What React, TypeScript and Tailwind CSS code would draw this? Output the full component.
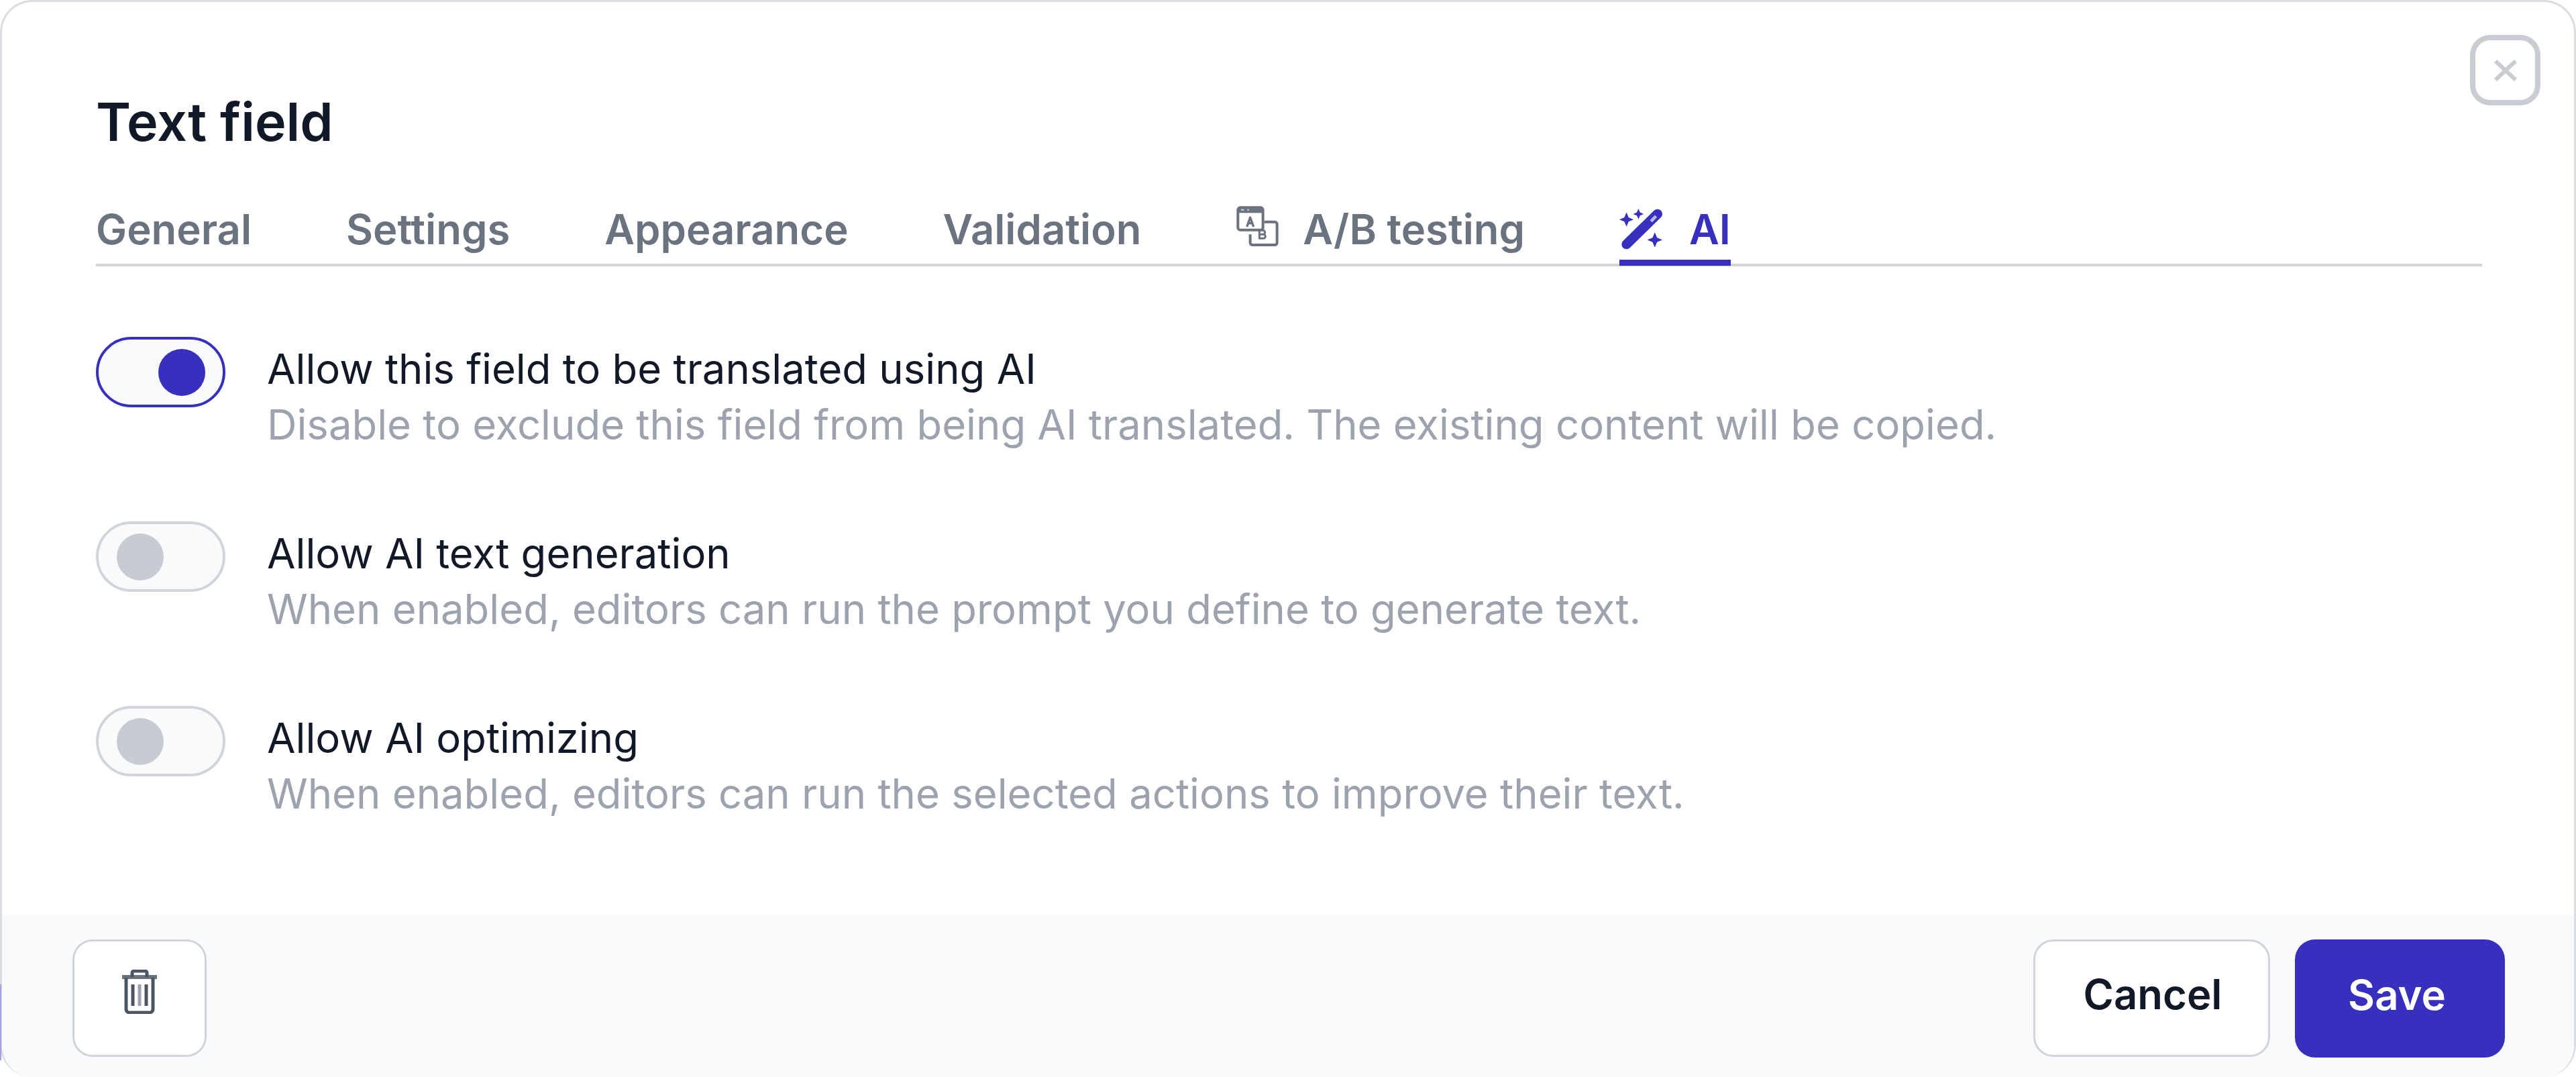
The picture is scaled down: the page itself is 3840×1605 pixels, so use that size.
import React from 'react';

const INDIGO = 'bg-[#372fbd]';

const AbIcon = () => (
  <svg viewBox="40 38 198 186" className="w-[66px] h-[62px] shrink-0" fill="none" stroke="#6b7280" strokeWidth="12" strokeLinejoin="round">
    <rect x="50" y="48" width="112" height="100" rx="10" />
    <rect x="50" y="46" width="112" height="26" fill="#6b7280" stroke="none" />
    <path d="M64 58h14M92 58h8" stroke="#d1d5db" strokeWidth="6" />
    <path d="M90 134l15-42 15 42M96 118h18" strokeWidth="10" />
    <path d="M168 112h47a10 10 0 0 1 10 10v83a10 10 0 0 1-10 10H115a10 10 0 0 1-10-10v-37" />
    <path d="M146 150h16a9 9 0 0 1 0 18h-16zM146 168h18a9 9 0 0 1 0 18h-18z" strokeWidth="9" />
  </svg>
);

const spark = (x: number, y: number, r: number) => {
  const k = r * 0.3;
  return `M${x} ${y - r}L${x + k} ${y - k}L${x + r} ${y}L${x + k} ${y + k}L${x} ${y + r}L${x - k} ${y + k}L${x - r} ${y}L${x - k} ${y - k}Z`;
};

const WandIcon = () => (
  <svg viewBox="40 40 200 197" className="w-[66px] h-[65px] shrink-0" fill="#372fbd">
    <path d="M72 207L212 70" stroke="#372fbd" strokeWidth="44" strokeLinecap="round" />
    <path d="M183 103L205 80" stroke="#b9b6ea" strokeWidth="14" />
    <path d={spark(72, 95, 32)} />
    <path d={spark(126, 70, 24)} />
    <path d={spark(200, 187, 34)} />
  </svg>
);

const TrashIcon = () => (
  <svg viewBox="0 0 52 66" className="w-[52px] h-[66px]" fill="none" stroke="#4b5563" strokeWidth="5">
    <path d="M0 11h52" strokeWidth="6" stroke="#6b7280" />
    <path d="M15 11V5a3 3 0 0 1 3-3h16a3 3 0 0 1 3 3v6" />
    <path d="M6 12v47a5 5 0 0 0 5 5h30a5 5 0 0 0 5-5V12" />
    <path d="M16 22v32M36 22v32" />
    <path d="M26 22v32" stroke="#9ca3af" />
  </svg>
);

const CloseIcon = () => (
  <svg viewBox="0 0 36 32" className="w-[36px] h-[32px]" fill="none" stroke="#c9cdd3" strokeWidth="6">
    <path d="M3 2l30 28M33 2L3 30" />
  </svg>
);

const tabs = ['General', 'Settings', 'Appearance', 'Validation'];

const rows = [
  { on: true, label: 'Allow this field to be translated using AI', hint: 'Disable to exclude this field from being AI translated. The existing content will be copied.' },
  { on: false, label: 'Allow AI text generation', hint: 'When enabled, editors can run the prompt you define to generate text.' },
  { on: false, label: 'Allow AI optimizing', hint: 'When enabled, editors can run the selected actions to improve their text.' },
];

const Toggle = ({ on }: { on: boolean }) => (
  <div className={`w-[193px] h-[105px] rounded-full border-[4px] shrink-0 flex items-center bg-[#f9fafb] ${on ? 'border-[#372fbd] justify-end pr-[26px]' : 'border-[#d1d5db] pl-[27px]'}`}>
    <div className={`w-[70px] h-[70px] rounded-full ${on ? INDIGO : 'bg-[#c7ccd3]'}`} />
  </div>
);

export default function App() {
  return (
    <div className="relative w-[3840px] h-[1605px] bg-white overflow-hidden font-['Inter',sans-serif]">
      <div className="w-full h-full flex flex-col rounded-[48px] border-x-[3px] border-t-[3px] border-[#d9dce1] overflow-hidden">
        <div className="flex-1 flex flex-col pl-[140px] pr-[137px] pt-[133px]">
          <h1 className="text-[79px] leading-[90px] font-semibold text-[#111827]">Text field</h1>
          <div className="mt-[76px] h-[95px] flex items-start gap-[141px] border-b-[4px] border-[#d1d5db]">
            {tabs.map(t => (
              <div key={t} className="text-[61.6px] leading-[80px] font-semibold text-[#6b7280]">{t}</div>
            ))}
            <div className="flex items-start gap-[34px]">
              <div className="pt-[4px]"><AbIcon /></div>
              <span className="text-[61.6px] leading-[80px] font-semibold text-[#6b7280]">A/B testing</span>
            </div>
            <div className="flex items-start gap-[38px] h-[94px] border-b-[9px] border-[#372fbd]">
              <div className="pt-[7px]"><WandIcon /></div>
              <span className="text-[61.6px] leading-[80px] font-semibold text-[#372fbd]">AI</span>
            </div>
          </div>
          <div className="mt-[105px] flex flex-col gap-[103px]">
            {rows.map(r => (
              <div key={r.label} className="flex items-start gap-[62px]">
                <Toggle on={r.on} />
                <div className="flex flex-col pt-[6px]">
                  <div className="text-[61.6px] leading-[83px] text-[#111827]">{r.label}</div>
                  <div className="text-[61.6px] leading-[83px] text-[#9ca3af]">{r.hint}</div>
                </div>
              </div>
            ))}
          </div>
        </div>
        <div className="h-[242px] bg-[#f9fafb] flex items-start justify-between pl-[105px] pr-[103px] pt-[37px]">
          <button className="w-[200px] h-[175px] rounded-[30px] border-[3px] border-[#d1d5db] bg-white flex items-center justify-center pb-[20px]">
            <TrashIcon />
          </button>
          <div className="flex gap-[37px]">
            <button className="w-[353px] h-[175px] rounded-[30px] border-[3px] border-[#d1d5db] bg-white text-[61.6px] font-semibold text-[#111827] pb-[10px] pl-[3px]">Cancel</button>
            <button className={`w-[313px] h-[176px] rounded-[30px] ${INDIGO} text-[61.6px] font-semibold text-white pb-[10px] pr-[9px]`}>Save</button>
          </div>
        </div>
      </div>
      <button className="absolute left-[3682px] top-[52px] w-[105px] h-[105px] rounded-[30px] border-[8px] border-[#c9cdd3] bg-white flex items-center justify-center">
        <CloseIcon />
      </button>
      <div className="absolute left-0 top-[1467px] w-[2px] h-[113px] bg-[#a5a0de]" />
    </div>
  );
}
